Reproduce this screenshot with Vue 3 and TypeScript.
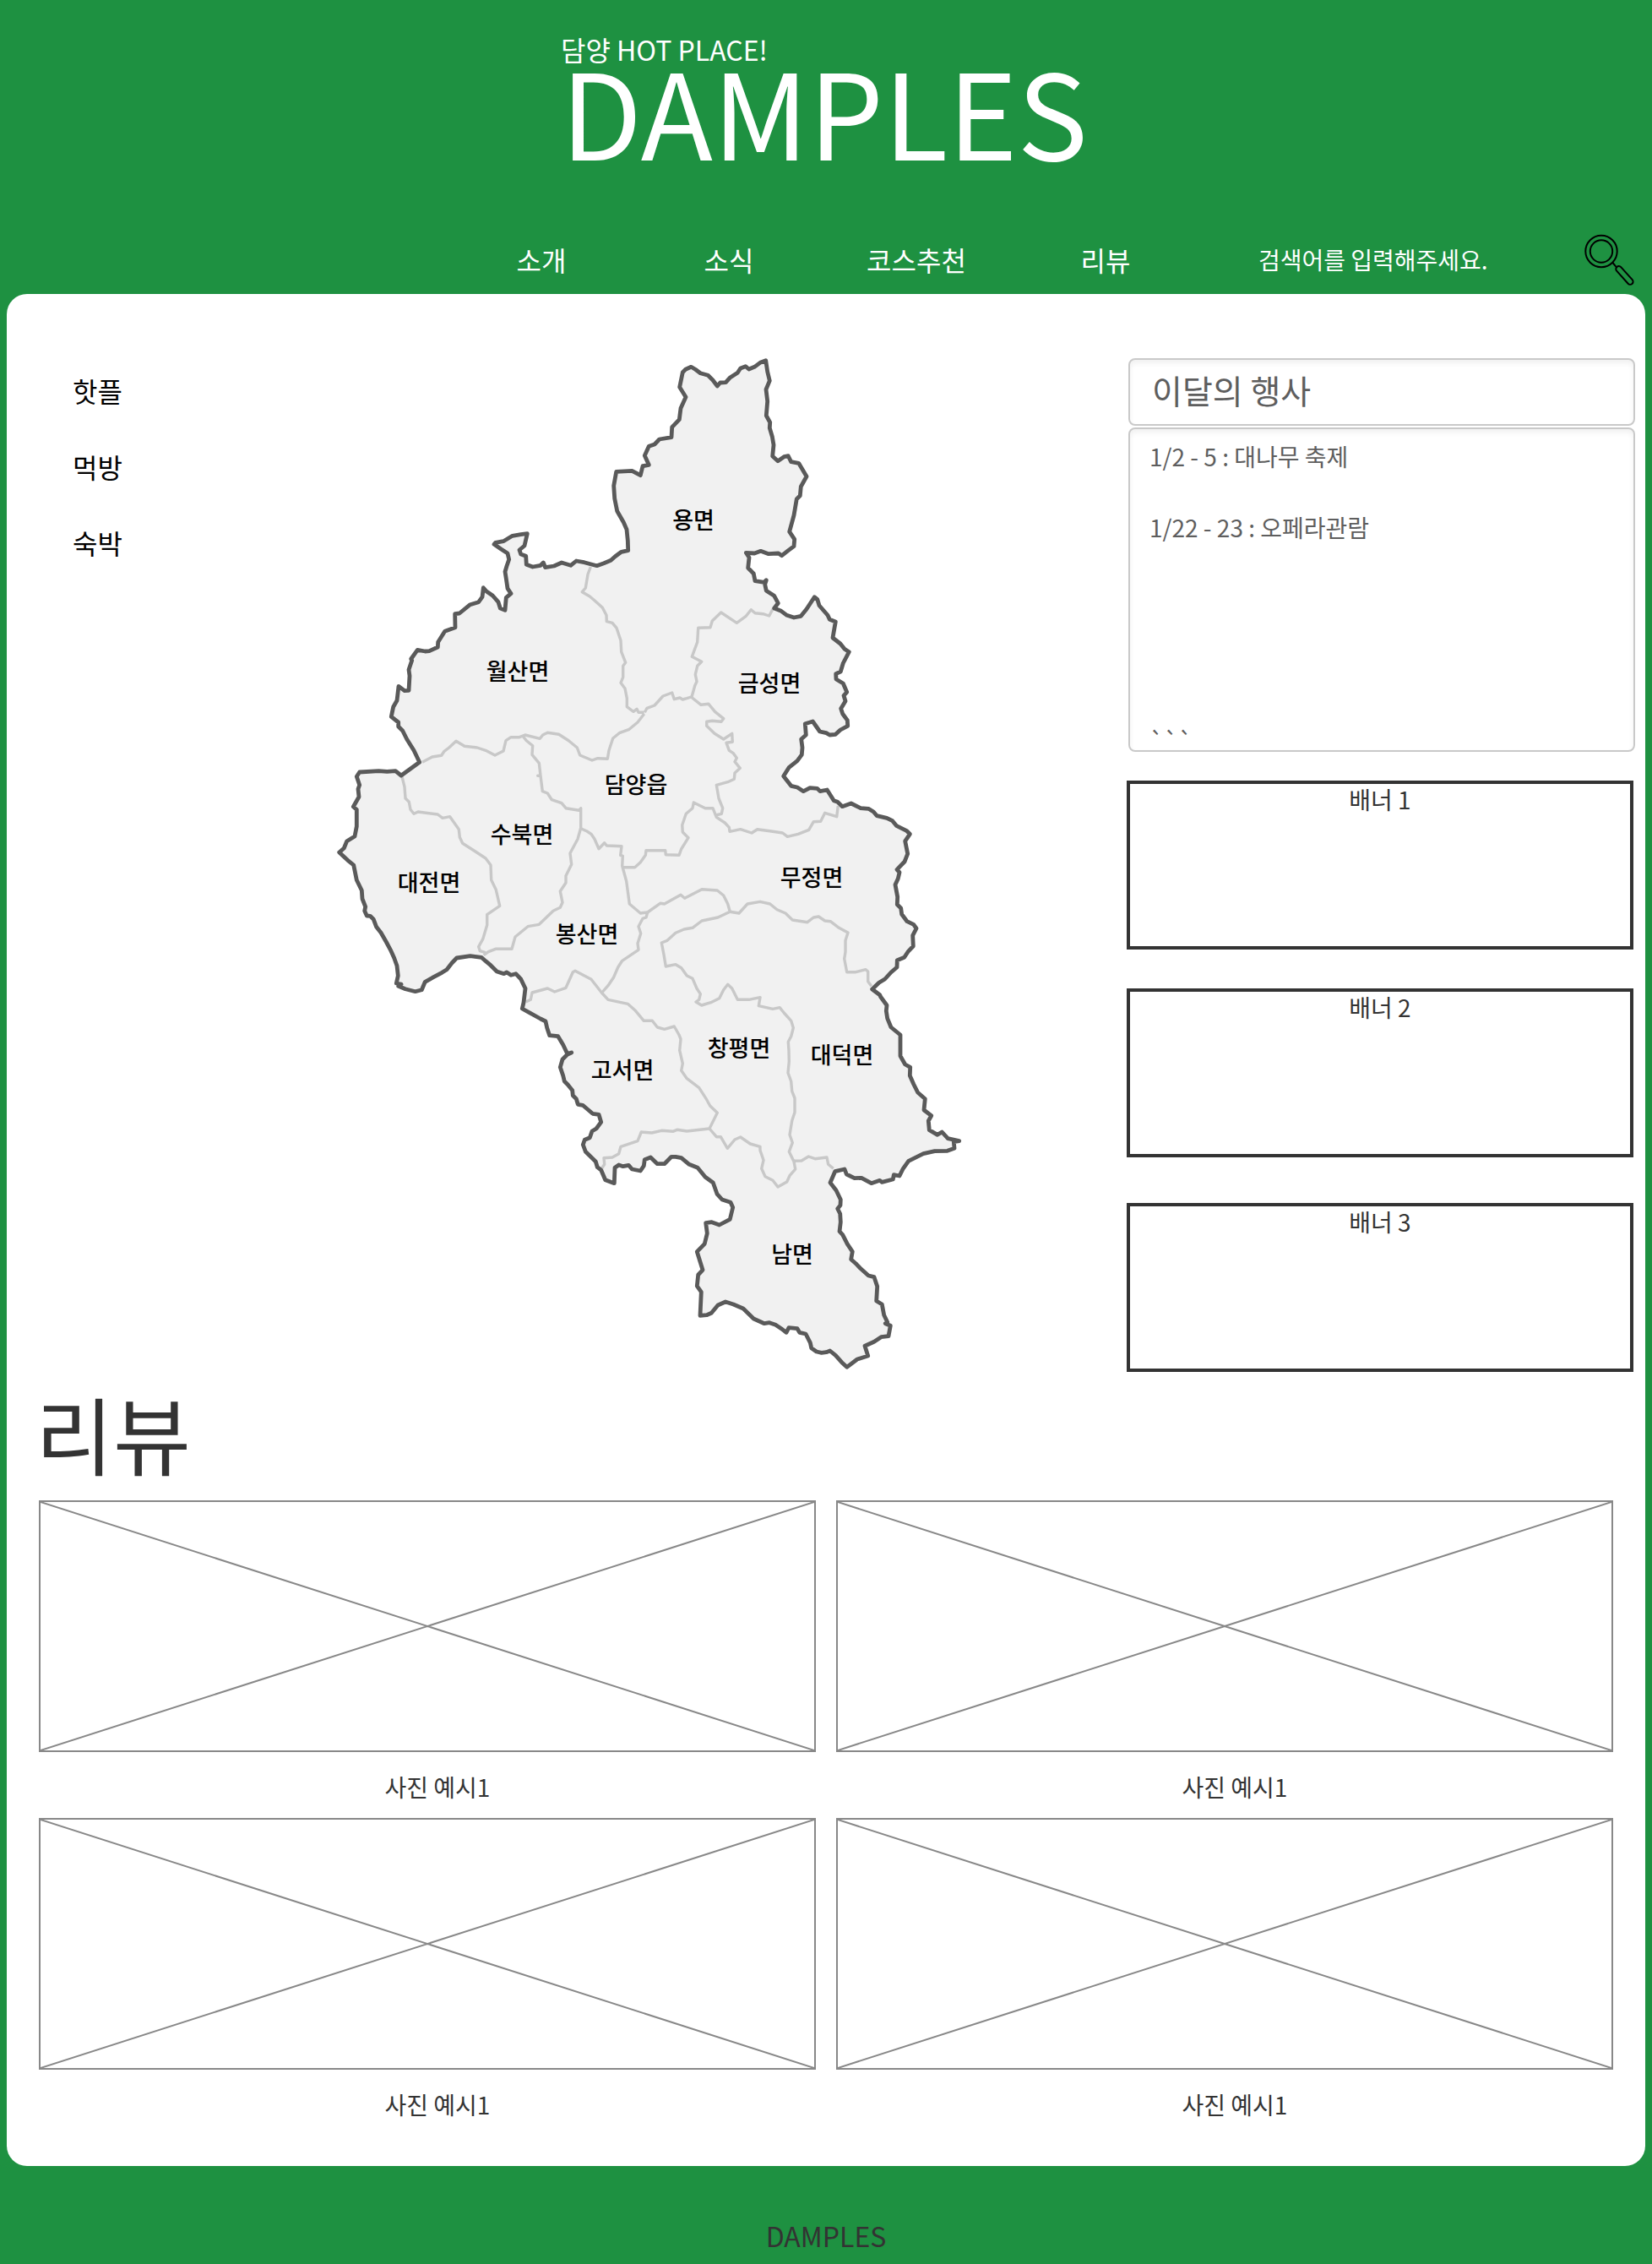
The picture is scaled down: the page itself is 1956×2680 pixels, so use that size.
<script setup lang="ts">
import { ref } from 'vue'

interface Sheet {
  x: number
  y: number
  points: string
}

interface District {
  name: string
  x: number
  y: number
}

const keyword = ref('')

const navItems = ['소개', '소식', '코스추천', '리뷰']
const categories = ['핫플', '먹방', '숙박']
const events = ['1/2 - 5 : 대나무 축제', '1/22 - 23 : 오페라관람']
const banners = ['배너 1', '배너 2', '배너 3']
const photos = [1, 2, 3, 4]

const districts: District[] = [
  { name: '용면', x: 821, y: 626 },
  { name: '월산면', x: 613, y: 805 },
  { name: '금성면', x: 911, y: 819 },
  { name: '담양읍', x: 753, y: 939 },
  { name: '수북면', x: 618, y: 998 },
  { name: '무정면', x: 961, y: 1049 },
  { name: '대전면', x: 508, y: 1055 },
  { name: '봉산면', x: 695, y: 1116 },
  { name: '창평면', x: 875, y: 1251 },
  { name: '대덕면', x: 997, y: 1259 },
  { name: '고서면', x: 737, y: 1277 },
  { name: '남면', x: 938, y: 1495 },
]

// Boundary points are stored per survey sheet: an origin and points at three units per map unit.
const S = (x: number, y: number, points: string): Sheet => ({ x, y, points })

function trace(...sheets: Sheet[]): string {
  const points = sheets.flatMap((sheet) =>
    sheet.points.split(' ').map((pair) => {
      const [px, py] = pair.split(',').map(Number)
      return `${(sheet.x + px / 3).toFixed(1)} ${(sheet.y + py / 3).toFixed(1)}`
    }),
  )
  return 'M' + points.join('L')
}

const outline =
  trace(
    S(660, 410, '445,92 455,82 475,73 490,82 508,95 535,103 552,120 568,141 578,129 598,128 612,112 640,94 650,78 668,71 680,81 700,73 720,58 740,50 746,90 754,122 741,153 746,195 742,246 755,270 754,290 763,320 768,350 764,390 783,407 805,392 820,389 830,410 857,415 885,462 865,498 862,530 850,542 840,600 824,658 842,685 840,710 820,725 797,743 785,735 750,737 722,727 700,735 670,733 681,750 677,787 697,807 702,833 735,838 742,830 737,845 742,868 770,886 784,912 770,930'),
    S(740, 640, '555,250 575,265 600,273 625,268 645,243 673,200 683,208 690,230 720,265 727,280 748,288 738,345 765,366 780,385 796,395 775,435 766,465 749,473 750,492 775,507 788,538 777,550 783,570 767,596 773,615 790,638 791,658 765,672 748,688 727,690 715,683 692,678 667,642 640,650 643,690 626,705 630,735 628,760 612,782 583,805 563,836 590,871 612,876 634,890 657,878 683,880 693,890 718,885 742,923 755,928 772,944 803,933 837,950'),
    S(700, 880, '985,232 1003,243 1015,257 1050,265 1070,275 1085,293 1120,310 1132,322 1115,347 1124,392 1113,420 1086,448 1095,458 1090,480 1080,502 1088,545 1087,572 1100,585 1103,607 1122,632 1145,643 1155,657 1142,682 1144,720 1125,740 1112,760 1087,770 1086,795 1065,813 1043,837 1022,850 998,873 1025,893'),
    S(800, 1180, '728,0 750,30 748,50 752,77 765,108 798,135 798,210 815,240 833,250 832,280 845,310 860,340 886,362 882,402 908,422 898,440 901,473 930,490 946,480 967,503 1007,512 988,515 990,538 965,547 920,548 880,557 827,583 808,610 795,636 775,632 772,648 733,658 725,652 695,662 660,643 635,644 607,630 600,612 566,620 549,660 570,687 586,720 585,740 575,752 584,770 586,800 582,833 593,845 610,878 628,905 623,932 640,947 655,963 685,990 705,995 716,1028 713,1080 733,1092 740,1130 752,1155 745,1160 763,1168 756,1205 730,1208 705,1225 672,1240 683,1275 645,1287 608,1315 590,1298 568,1273 548,1257 535,1262 518,1264 500,1260 482,1247 478,1228 462,1197 440,1192 432,1178 402,1175 393,1192 375,1178 355,1165 333,1157 315,1160 277,1143 240,1107 205,1092 177,1083 150,1095 127,1123 110,1130 87,1132 91,1048 76,1027 80,987 96,970 76,905 103,877 112,840 107,803 128,800 155,810 193,790 203,748 195,730 165,720 147,700 133,660 105,640 78,607 48,595 20,572'),
    S(600, 1080, '600,868 585,868 560,893 535,893 511,870 490,878 487,900 475,918 445,912 433,898 413,902 398,897 384,907 382,962 350,950 335,915 322,905 316,885 280,850 271,825 277,808 295,800 303,777 318,768 335,745 327,718 305,715 270,685 253,682 247,662 235,650 233,632 217,612 205,600 200,580 190,550 198,522 215,505 230,498 215,502 200,470 182,440 152,437 143,410 138,387 120,378 80,356 55,342 60,320 66,270 50,237 32,218 15,223'),
    S(380, 860, '660,873 650,878 625,870 603,848 585,833 570,820 530,815 482,822 465,840 447,863 430,874 400,890 370,907 358,935 335,941 300,932 275,922 285,915 268,912 274,885 270,850 260,822 247,793 232,765 213,732 197,712 187,685 175,673 163,672 155,655 158,640 147,612 145,582 127,545 116,492 95,475 65,447 82,432 92,407 120,390 127,355 127,295 115,285 135,250 132,222 137,208 127,178 137,162 205,158 235,160 265,158 285,174 350,127 330,85 305,45 290,15 275,0'),
    S(440, 600, '95,765 70,745 77,710 90,688 96,637 117,653 132,652 135,600 132,578 143,545 140,540 163,508 190,513 205,512 235,498 236,480 260,442 297,428 296,380 312,378 350,347 380,338 393,320 397,287 408,300 430,315 450,338 457,360 474,367 478,322 495,308 483,290 478,255 474,230 480,210 488,187 483,165 460,150 435,133 440,127 468,122 500,103 530,98 553,95 543,138 525,153 530,168 548,175 550,205 572,213 600,208 610,198 617,215 648,210 675,198 707,208 727,192 755,197 800,209 825,200 850,190 865,176 887,160 911,155'),
    S(660, 410, '250,690 246,650 235,625 212,585 203,540 200,495 209,445 265,442 295,458 303,425 325,421 310,388 325,355 345,348 362,330 405,323 407,287 433,260 438,220 456,180 434,145'),
  ) + 'Z'

const borders = [
  trace(S(440, 600, '778,213 768,240 760,288 748,302 775,318 795,335 820,358 834,385 835,407 855,412 870,430 885,475 887,515 902,553 893,565 893,605 885,625 900,645 907,680 907,710 930,727 942,718 948,730 968,730')),
  trace(S(440, 600, '968,735 945,765 915,790 880,803 857,822 843,865 838,895 803,893 783,900 740,882 730,855 700,830 665,808 625,802 608,810 598,823 545,810 525,818 495,818 477,830 468,867 438,882 405,865 375,855 330,850 300,832 275,855 258,868 248,883 215,888 180,907')),
  trace(S(740, 640, '70,610 78,595 105,585 135,552 167,540 175,563 195,558 205,564 220,560 235,555 270,583 297,580 320,608 350,632 342,643 310,640 290,643 290,658 318,685 350,705 380,685 382,715 360,718 370,745 385,755 397,772 390,785 409,808 390,825 388,847 365,857 325,868 333,915 347,950 343,970 322,975')),
  trace(S(740, 640, '237,555 248,515 255,500 250,475 257,445 272,430 238,412 257,360 260,310 303,308 310,285 341,255 397,292 430,268 448,245 462,257 490,260 512,267 525,243')),
  trace(S(700, 880, '112,440 155,440 175,422 193,397 195,380 263,380 265,395 312,397 320,375 345,335 325,315 323,290 337,250 360,230 364,210 405,230 432,230 445,262 475,282 490,298 492,313 530,305 570,318 590,305 640,312 680,318 697,331 735,322 773,307 790,278 815,277 830,247 872,260 877,222')),
  trace(S(700, 880, '-37,302 -15,312 0,322 12,340 27,374 47,353 55,363 108,365 104,397 112,400 110,435 125,490 136,570 175,603 200,600')),
  trace(
    S(700, 880, '200,600 245,568 260,570 318,538 332,550 393,518 448,522 470,540 485,570 493,598 450,618 393,630 360,655 330,660 300,673 270,700 250,708 258,750 265,792 300,785 320,797 340,825 360,835 375,870 388,890 383,910 372,918 392,930 425,920 455,905 470,875 485,856 500,870 520,910 560,910'),
    S(600, 1080, '900,302 895,332 945,343 970,338 985,357 1010,385 1018,410 1010,440 1000,460 1002,490 1003,530 999,570 1010,600 1013,635 1023,660 1023,710 1013,740 1005,790 1015,818 1003,850 1020,885 1025,912 1005,935 995,957 963,975 945,952 918,938 905,910 912,880 900,845 900,832 865,822 830,798 810,807 784,838 760,797 745,797 720,768'),
  ),
  trace(S(700, 880, '493,598 525,603 555,570 600,562 635,570 660,590 690,603 715,627 768,635 790,618 808,615 830,630 850,632 880,655 912,672 903,700 903,740 899,765 908,812 940,812 975,803 983,810 983,845 995,862')),
  trace(S(700, 880, '200,600 195,618 183,622 168,650 176,675 165,710 168,733 140,752 110,772 95,795 80,830 60,860 38,885')),
  trace(S(600, 1080, '68,318 85,310 90,285 145,270 170,282 210,268 235,212 243,208 300,238 337,285 360,310 430,325 455,347 487,385 517,385 535,408 560,415 595,405 612,435 618,450 614,490 625,537 620,562 640,590 683,623 710,665 722,687 748,712 720,768 640,777 605,772 590,778 550,775 515,783 478,780 465,812 405,832 398,857 375,870 345,872 347,895 338,908')),
  trace(S(800, 1180, '420,583 447,582 472,567 495,575 537,570 542,595 560,610')),
  trace(S(380, 860, '718,35 730,50 752,68 750,100 775,130 780,175 770,175 780,175 787,230 805,237 820,260 855,272 870,290 917,298 923,290 923,360 912,400 885,450 890,490 870,530 870,555 850,585 858,625 850,643 825,655 775,703 735,710 690,747 678,790 620,790 595,800 578,812')),
  trace(S(380, 860, '288,178 297,215 300,255 313,268 318,295 330,310 345,303 415,312 432,325 458,320 490,365 493,393 503,415 550,445 585,468 603,492 605,545 622,580 635,637 590,668 590,705 575,755 560,782 565,797 585,803')),
]
</script>

<template>
  <div class="page">
    <header class="header">
      <div class="brand">
        <p class="tagline">담양 HOT PLACE!</p>
        <h1 class="logo">DAMPLES</h1>
      </div>
      <nav class="nav" aria-label="주 메뉴">
        <span></span>
        <a v-for="item in navItems" :key="item" href="#">{{ item }}</a>
        <form class="search" role="search" @submit.prevent>
          <input v-model="keyword" type="text" aria-label="검색어" placeholder="검색어를 입력해주세요." />
          <button type="submit" aria-label="검색">
            <svg viewBox="0 0 60 61" width="60" height="61" fill="none" stroke="#000" stroke-width="2">
              <circle cx="20" cy="20.5" r="18.7" />
              <circle cx="20" cy="20.5" r="13.2" />
              <path d="M33.5 34L37.5 38.8" />
              <rect width="27" height="6.8" y="-3.4" rx="3.4" transform="translate(38.4 38.9) rotate(48)" />
            </svg>
          </button>
        </form>
      </nav>
    </header>

    <main class="panel">
      <div class="top">
        <nav class="categories" aria-label="분류">
          <a v-for="category in categories" :key="category" href="#">{{ category }}</a>
        </nav>

        <svg class="map" viewBox="390 415 760 1215" role="img" aria-label="담양군 지도">
          <path class="land" :d="outline" />
          <path v-for="(border, i) in borders" :key="i" class="border" :d="border" />
          <path class="coast" :d="outline" />
          <text v-for="d in districts" :key="d.name" :x="d.x" :y="d.y">{{ d.name }}</text>
        </svg>

        <span></span>

        <aside class="side">
          <h2 class="box events-title">이달의 행사</h2>
          <ul class="box events">
            <li v-for="event in events" :key="event">{{ event }}</li>
            <li class="more">```</li>
          </ul>
          <section v-for="banner in banners" :key="banner" class="banner">{{ banner }}</section>
        </aside>
      </div>

      <section class="reviews">
        <h2>리뷰</h2>
        <div class="photos">
          <figure v-for="photo in photos" :key="photo">
            <div class="frame">
              <svg viewBox="0 0 100 100" preserveAspectRatio="none" aria-hidden="true">
                <path d="M0 0L100 100M0 100L100 0" vector-effect="non-scaling-stroke" />
              </svg>
            </div>
            <figcaption>사진 예시1</figcaption>
          </figure>
        </div>
      </section>
    </main>

    <footer class="footer">DAMPLES</footer>
  </div>
</template>

<style>
body {
  margin: 0;
  background: #1e9141;
}
</style>

<style scoped>
.page {
  font-family: 'Noto Sans CJK KR', sans-serif;
  background: #1e9141;
  color: #333;
}

.page * {
  box-sizing: border-box;
}

h1,
h2,
p,
ul,
figure {
  margin: 0;
  padding: 0;
  font-weight: 400;
}

a {
  color: inherit;
  text-decoration: none;
}

.header {
  padding-top: 39px;
  color: #fff;
}

.brand {
  width: fit-content;
  margin: 0 auto;
  padding-right: 4px;
}

.tagline {
  font-size: 32px;
  line-height: 38px;
}

.logo {
  font-size: 140px;
  line-height: 104px;
}

.nav {
  display: grid;
  grid-template-columns: 530fr repeat(3, 222fr) 226fr 534fr;
  align-items: center;
  height: 60px;
  margin: 94px 0 13px;
  font-size: 32px;
  text-align: center;
}

.search {
  display: flex;
  align-items: center;
  justify-content: space-between;
  padding: 0 20px 0 68px;
}

.search input {
  flex: 1;
  min-width: 0;
  padding: 0;
  border: 0;
  outline: 0;
  background: none;
  color: #fff;
  font: inherit;
  font-size: 28px;
}

.search input::placeholder {
  color: #fff;
  opacity: 1;
}

.search button {
  padding: 2px 0 0;
  border: 0;
  background: none;
  line-height: 0;
  cursor: pointer;
}

.panel {
  margin: 0 8px;
  padding: 67px 0 52px;
  border-radius: 24px;
  background: #fff;
}

.top {
  display: grid;
  grid-template-columns: 382fr 760fr 184fr 602fr;
  align-items: start;
  padding-right: 12px;
}

.categories {
  display: flex;
  flex-direction: column;
  gap: 42px;
  padding: 23px 0 0 78px;
  color: #000;
  font-size: 32px;
  line-height: 48px;
}

.map {
  display: block;
  width: 100%;
}

.land {
  fill: #f1f1f1;
}

.border {
  fill: none;
  stroke: #c8c8c8;
  stroke-width: 3.4;
  stroke-linejoin: round;
}

.coast {
  fill: none;
  stroke: #5a5a5a;
  stroke-width: 4.8;
  stroke-linejoin: round;
}

.map text {
  fill: #000;
  font-size: 27px;
  font-weight: 500;
  text-anchor: middle;
}

.side {
  padding-top: 9px;
}

.box {
  margin-left: 2px;
  border: 2px solid #c9c9c9;
  border-radius: 8px;
  box-shadow: inset 0 4px 6px rgba(0, 0, 0, 0.06);
  color: #5e5e5e;
}

.events-title {
  padding: 0 26px 6px;
  font-size: 39px;
  line-height: 70px;
}

.events {
  height: 384px;
  margin-top: 2px;
  padding: 11px 23px 0;
  list-style: none;
  font-size: 28px;
  line-height: 42px;
}

.events li {
  margin-bottom: 42px;
}

.events .more {
  margin: 210px 0 0;
}

.banner {
  height: 200px;
  margin: 46px 2px 0 0;
  border: 4px solid #333;
  font-size: 28px;
  line-height: 36px;
  text-align: center;
}

.events + .banner {
  margin-top: 34px;
}

.banner:last-child {
  margin-top: 54px;
}

.reviews {
  padding: 0 34px;
}

.reviews h2 {
  margin: 14px 0 28px;
  font-size: 100px;
  line-height: 104px;
}

.photos {
  display: grid;
  grid-template-columns: 1fr 1fr;
  gap: 16px 24px;
  padding: 0 4px;
}

.frame {
  height: 298px;
  border: 2px solid #888;
}

.frame svg {
  display: block;
  width: 100%;
  height: 100%;
}

.frame path {
  fill: none;
  stroke: #888;
  stroke-width: 2;
}

figcaption {
  margin-top: 20px;
  padding-left: 24px;
  font-size: 28px;
  line-height: 42px;
  text-align: center;
}

.footer {
  padding: 58px 0 10px;
  font-size: 32px;
  line-height: 48px;
  text-align: center;
}
</style>
